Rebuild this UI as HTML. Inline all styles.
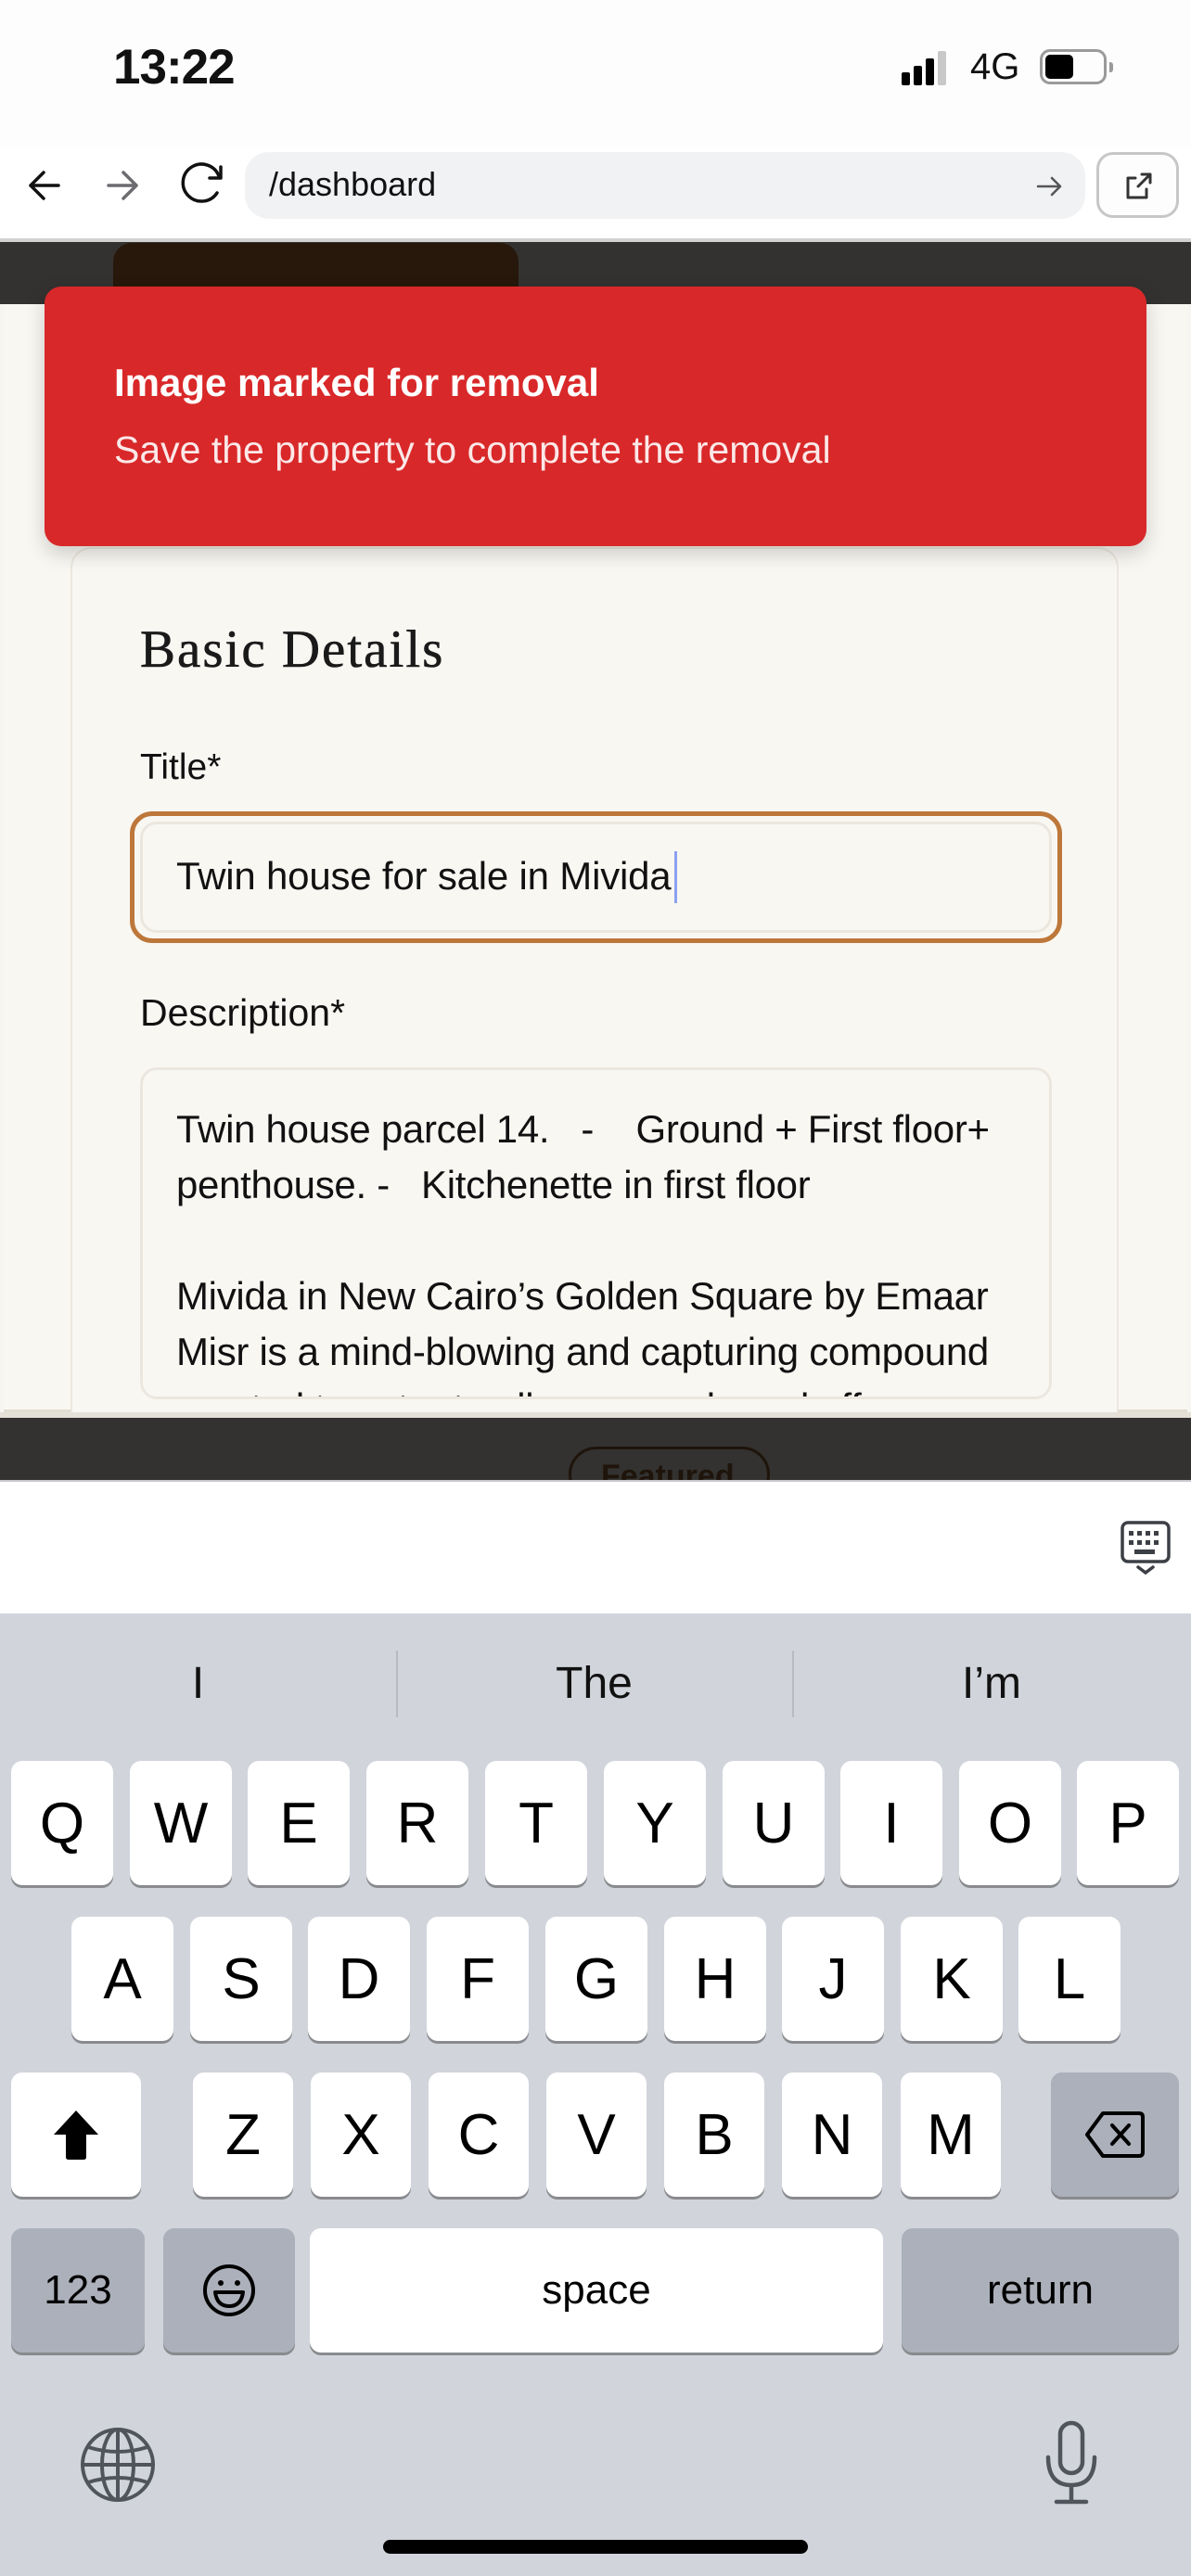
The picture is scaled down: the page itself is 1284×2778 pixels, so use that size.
<!DOCTYPE html>
<html><head><meta charset="utf-8"><style>
*{margin:0;padding:0;box-sizing:border-box}
body{width:1284px;height:2778px;position:relative;overflow:hidden;background:#fff;font-family:"Liberation Sans",sans-serif;color:#111}
.abs{position:absolute}
.key{position:absolute;background:#fff;border-radius:12px;box-shadow:0 3px 0 #898a8e;display:flex;align-items:center;justify-content:center;font-size:62px;color:#000}
.sp{background:#abb0ba}
</style></head><body>
<!-- status bar -->
<div class="abs" style="left:0;top:0;width:1284px;height:160px;background:#fdfdfd"></div>
<div class="abs" style="left:122px;top:42px;font-size:53px;font-weight:bold;letter-spacing:-1px">13:22</div>
<div class="abs" style="left:972px;top:78px;width:9px;height:14px;background:#000;border-radius:2px"></div>
<div class="abs" style="left:985px;top:71px;width:9px;height:21px;background:#000;border-radius:2px"></div>
<div class="abs" style="left:998px;top:63px;width:9px;height:29px;background:#000;border-radius:2px"></div>
<div class="abs" style="left:1011px;top:55px;width:9px;height:37px;background:#c8c8c8;border-radius:2px"></div>
<div class="abs" style="left:1046px;top:50px;font-size:40px">4G</div>
<div class="abs" style="left:1121px;top:53px;width:72px;height:38px;border:3px solid #9a9a9a;border-radius:11px"></div>
<div class="abs" style="left:1127px;top:59px;width:30px;height:26px;background:#000;border-radius:5px"></div>
<div class="abs" style="left:1196px;top:67px;width:4px;height:11px;background:#9a9a9a;border-radius:0 3px 3px 0"></div>
<!-- browser bar -->
<svg class="abs" style="left:20px;top:170px" width="240" height="60" viewBox="20 170 240 60" fill="none" stroke-linecap="round" stroke-linejoin="round">
<path d="M63 200H33M47 186L33 200L47 214" stroke="#111" stroke-width="3.5"/>
<path d="M117 200H147M133 186L147 200L133 214" stroke="#6b6b70" stroke-width="3.5"/>
<path d="M234 208A20 20 0 1 1 236 190" stroke="#111" stroke-width="3.5"/>
<path d="M238 180V192H226" stroke="#111" stroke-width="3.5"/>
</svg>
<div class="abs" style="left:264px;top:164px;width:906px;height:72px;background:#f1f2f4;border-radius:26px"></div>
<div class="abs" style="left:290px;top:178px;font-size:36px;color:#111">/dashboard</div>
<svg class="abs" style="left:1115px;top:188px" width="32" height="26" viewBox="0 0 32 26" fill="none" stroke="#555" stroke-width="2.5" stroke-linecap="round" stroke-linejoin="round"><path d="M4 13H28M19 4L28 13L19 22"/></svg>
<div class="abs" style="left:1182px;top:164px;width:89px;height:71px;border:3px solid #c7c7c7;border-radius:18px;background:#fdfdfd"></div>
<svg class="abs" style="left:1210px;top:184px" width="34" height="34" viewBox="0 0 34 34" fill="none" stroke="#333" stroke-width="3" stroke-linecap="round" stroke-linejoin="round"><path d="M14 8H6V29H26V20M17 17L30 4M21 4H30V13"/></svg>
<div class="abs" style="left:0;top:257px;width:1284px;height:4px;background:#d2d2d2"></div>
<!-- dark overlay -->
<div class="abs" style="left:0;top:261px;width:1284px;height:1336px;background:#333230"></div>
<div class="abs" style="left:122px;top:262px;width:437px;height:80px;background:#27180b;border-radius:20px 20px 0 0"></div>
<!-- sheet -->
<div class="abs" style="left:0;top:328px;width:1284px;height:1201px;background:#f7f5ef"></div>
<div class="abs" style="left:4px;top:328px;width:1276px;height:1195px;background:#f9f7f2;border-bottom:3px solid #e2ddd2"></div>
<div class="abs" style="left:76px;top:590px;width:1130px;height:935px;border:2px solid #ebe7df;border-bottom:none;border-radius:22px 22px 0 0;background:#f9f7f2"></div>
<div class="abs" style="left:151px;top:668px;font-family:'Liberation Serif',serif;font-size:57px;color:#1a1a1a;letter-spacing:2px;-webkit-text-stroke:0.6px #1a1a1a">Basic Details</div>
<div class="abs" style="left:151px;top:806px;font-size:39px;color:#111">Title*</div>
<div class="abs" style="left:140px;top:875px;width:1005px;height:142px;border:5px solid #bd773a;border-radius:24px"></div>
<div class="abs" style="left:151px;top:886px;width:983px;height:120px;border:3px solid #ebe7df;border-radius:18px;background:#f9f7f2"></div>
<div class="abs" style="left:190px;top:921px;font-size:42px;color:#111;letter-spacing:-0.2px">Twin house for sale in Mivida</div>
<div class="abs" style="left:727px;top:918px;width:3px;height:56px;background:#8ca2f0"></div>
<div class="abs" style="left:151px;top:1069px;font-size:41px;color:#111">Description*</div>
<div class="abs" style="left:151px;top:1151px;width:983px;height:358px;border:3px solid #ebe7df;border-radius:18px;background:#f9f7f2;overflow:hidden">
<div style="position:absolute;left:36px;top:34px;font-size:42px;line-height:60px;color:#111;white-space:pre;letter-spacing:-0.3px">Twin house parcel 14.   -    Ground + First floor+
penthouse. -   Kitchenette in first floor

Mivida in New Cairo’s Golden Square by Emaar
Misr is a mind-blowing and capturing compound
created to cater to all your needs and offer you</div></div>
<div class="abs" style="left:0;top:1523px;width:1284px;height:6px;background:#e5e1d8"></div>
<div class="abs" style="left:613px;top:1560px;width:217px;height:60px;border:3px solid #1e140b;border-radius:30px;overflow:hidden"><div style="position:absolute;left:32px;top:10px;font-size:34px;font-weight:bold;color:#1e140b">Featured</div></div>
<!-- toast -->
<div class="abs" style="left:48px;top:309px;width:1188px;height:280px;background:#d92829;border-radius:18px;box-shadow:0 8px 22px rgba(0,0,0,.18)"></div>
<div class="abs" style="left:123px;top:389px;font-size:42px;font-weight:bold;color:#fff">Image marked for removal</div>
<div class="abs" style="left:123px;top:462px;font-size:41px;color:#fbe8e8">Save the property to complete the removal</div>
<!-- keyboard accessory -->
<div class="abs" style="left:0;top:1596px;width:1284px;height:144px;background:#fff;border-top:2px solid #c7c9cd"></div>
<svg class="abs" style="left:1208px;top:1640px" width="54" height="60" viewBox="0 0 54 60" fill="none"><rect x="2" y="2" width="50" height="42" rx="6" stroke="#3c3f45" stroke-width="3.5"/><g fill="#3c3f45"><rect x="9" y="11" width="5" height="5"/><rect x="18" y="11" width="5" height="5"/><rect x="27" y="11" width="5" height="5"/><rect x="36" y="11" width="5" height="5"/><rect x="9" y="21" width="5" height="5"/><rect x="18" y="21" width="5" height="5"/><rect x="27" y="21" width="5" height="5"/><rect x="36" y="21" width="5" height="5"/><rect x="15" y="31" width="22" height="5"/></g><path d="M19 50L27 56L35 50" stroke="#3c3f45" stroke-width="3.5" stroke-linecap="round"/></svg>
<!-- keyboard -->
<div class="abs" style="left:0;top:1740px;width:1284px;height:1038px;background:#d1d4db"></div>
<div class="abs" style="left:0;top:1788px;width:427px;text-align:center;font-size:48px">I</div>
<div class="abs" style="left:427px;top:1780px;width:2px;height:72px;background:#b8bbc1"></div>
<div class="abs" style="left:427px;top:1788px;width:427px;text-align:center;font-size:48px">The</div>
<div class="abs" style="left:854px;top:1780px;width:2px;height:72px;background:#b8bbc1"></div>
<div class="abs" style="left:854px;top:1788px;width:430px;text-align:center;font-size:48px">I’m</div>

<div class="key" style="left:12px;top:1899px;width:110px;height:134px">Q</div>
<div class="key" style="left:140px;top:1899px;width:110px;height:134px">W</div>
<div class="key" style="left:267px;top:1899px;width:110px;height:134px">E</div>
<div class="key" style="left:395px;top:1899px;width:110px;height:134px">R</div>
<div class="key" style="left:523px;top:1899px;width:110px;height:134px">T</div>
<div class="key" style="left:651px;top:1899px;width:110px;height:134px">Y</div>
<div class="key" style="left:779px;top:1899px;width:110px;height:134px">U</div>
<div class="key" style="left:906px;top:1899px;width:110px;height:134px">I</div>
<div class="key" style="left:1034px;top:1899px;width:110px;height:134px">O</div>
<div class="key" style="left:1161px;top:1899px;width:110px;height:134px">P</div>

<div class="key" style="left:77px;top:2067px;width:110px;height:134px">A</div>
<div class="key" style="left:205px;top:2067px;width:110px;height:134px">S</div>
<div class="key" style="left:332px;top:2067px;width:110px;height:134px">D</div>
<div class="key" style="left:460px;top:2067px;width:110px;height:134px">F</div>
<div class="key" style="left:588px;top:2067px;width:110px;height:134px">G</div>
<div class="key" style="left:716px;top:2067px;width:110px;height:134px">H</div>
<div class="key" style="left:843px;top:2067px;width:110px;height:134px">J</div>
<div class="key" style="left:971px;top:2067px;width:110px;height:134px">K</div>
<div class="key" style="left:1098px;top:2067px;width:110px;height:134px">L</div>

<div class="key" style="left:12px;top:2235px;width:140px;height:134px"><svg width="52" height="56" viewBox="0 0 52 56"><path d="M26 2L50 28H37V52Q37 55 34 55H18Q15 55 15 52V28H2Z" fill="#000"/></svg></div>
<div class="key" style="left:208px;top:2235px;width:108px;height:134px">Z</div>
<div class="key" style="left:335px;top:2235px;width:108px;height:134px">X</div>
<div class="key" style="left:462px;top:2235px;width:108px;height:134px">C</div>
<div class="key" style="left:589px;top:2235px;width:108px;height:134px">V</div>
<div class="key" style="left:716px;top:2235px;width:108px;height:134px">B</div>
<div class="key" style="left:843px;top:2235px;width:108px;height:134px">N</div>
<div class="key" style="left:971px;top:2235px;width:108px;height:134px">M</div>
<div class="key sp" style="left:1133px;top:2235px;width:138px;height:134px"><svg width="66" height="52" viewBox="0 0 66 52" fill="none" stroke="#000" stroke-width="4" stroke-linejoin="round" stroke-linecap="round"><path d="M20 3H59Q63 3 63 7V45Q63 49 59 49H20L3 26Z"/><path d="M30 16L48 36M48 16L30 36"/></svg></div>

<div class="key sp" style="left:12px;top:2403px;width:144px;height:134px;font-size:44px">123</div>
<div class="key sp" style="left:176px;top:2403px;width:142px;height:134px"><svg width="60" height="60" viewBox="0 0 60 60" fill="none" stroke="#000" stroke-width="4"><circle cx="30" cy="30" r="26"/><circle cx="21" cy="22" r="3" fill="#000" stroke="none"/><circle cx="39" cy="22" r="3" fill="#000" stroke="none"/><path d="M15 32H45Q43 47 30 47Q17 47 15 32Z" stroke-linejoin="round"/></svg></div>
<div class="key" style="left:334px;top:2403px;width:618px;height:134px;font-size:44px">space</div>
<div class="key sp" style="left:972px;top:2403px;width:299px;height:134px;font-size:44px">return</div>

<svg class="abs" style="left:86px;top:2617px" width="82" height="82" viewBox="0 0 82 82" fill="none" stroke="#50545c" stroke-width="4"><circle cx="41" cy="41" r="38"/><ellipse cx="41" cy="41" rx="17" ry="38"/><path d="M41 3V79M3 41H79M9 22Q41 32 73 22M9 60Q41 50 73 60"/></svg>
<svg class="abs" style="left:1125px;top:2610px" width="60" height="92" viewBox="0 0 60 92" fill="none" stroke="#50545c" stroke-width="4.5" stroke-linecap="round"><rect x="18" y="3" width="24" height="54" rx="12"/><path d="M5 40Q5 70 30 70Q55 70 55 40M30 70V88M14 88H46"/></svg>
<div class="abs" style="left:413px;top:2739px;width:458px;height:15px;background:#000;border-radius:8px"></div>
</body></html>
